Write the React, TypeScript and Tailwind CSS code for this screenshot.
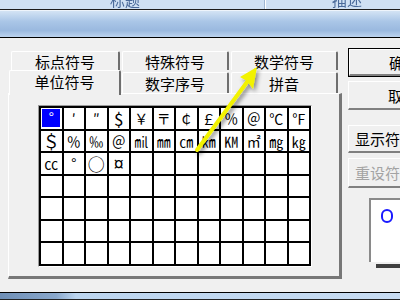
const ROWS: string[][] = [
  ['°', '′', '″', '$', '￥', '〒', '￠', '￡', '％', '＠', '℃', '℉'],
  ['＄', '％', '‰', '＠', '㏕', '㎜', '㎝', '㎞', '㏎', '㎡', '㎎', '㎏'],
  ['㏄', '°', '○', '¤', '', '', '', '', '', '', '', ''],
  Array(12).fill(''),
  Array(12).fill(''),
  Array(12).fill(''),
  Array(12).fill(''),
];

const BIG = new Set(['○', '¤', '$', '＄']);

const TAB = "flex items-center justify-center bg-[#f0f0f0] border-t border-l border-white border-r-2 border-r-[#6e6e6e] rounded-t-[2px] text-[15px] leading-none text-black whitespace-nowrap";
const BTN = "flex items-center whitespace-nowrap border-t border-l border-r-2 border-b-2 border-[#808080] border-t-white border-l-white";

function Arrow() {
  return (
    <svg className="absolute left-0 top-0 pointer-events-none" width="400" height="300">
      <defs>
        <filter id="sh" x="-20%" y="-20%" width="140%" height="140%">
          <feDropShadow dx="2" dy="3" stdDeviation="2" floodColor="#000" floodOpacity="0.45" />
        </filter>
      </defs>
      <g filter="url(#sh)">
        <line x1="197" y1="150" x2="250" y2="78" stroke="#f2f200" strokeWidth="4" strokeLinecap="round" />
        <polygon points="257,67 253,89 247,81 240,77" fill="#f2f200" />
      </g>
    </svg>
  );
}

export default function App() {
  return (
    <div className="relative w-[400px] h-[300px] overflow-hidden bg-[#f0f0f0] font-['Noto_Sans_CJK_SC',sans-serif]">
      {/* header strip */}
      <div className="flex h-[9px] overflow-hidden bg-[#cfe0f3]">
        <div className="w-[264px] pl-[110px]">
          <span className="block -mt-[8px] text-[15px] leading-none text-[#4a6a9a] blur-[0.5px]">标题</span>
        </div>
        <div className="w-px bg-[#9fb6d2]" />
        <div className="w-px bg-white" />
        <div className="pl-[66px]">
          <span className="block -mt-[8px] text-[15px] leading-none text-[#4a6a9a] blur-[0.5px]">描述</span>
        </div>
      </div>
      <div className="h-px bg-[#1c1c1c]" />
      <div className="h-px bg-[#eef4fb]" />
      <div className="h-[26px] bg-[linear-gradient(to_bottom,#d3e3f4,#aac6e7_40%,#9ab9df_75%,#bcd3ee)]" />
      <div className="h-px bg-black" />

      {/* main */}
      <div className="flex h-[254px]">
        <div className="shrink-0 ml-[8px] w-[334px] mt-[13px] flex flex-col">
          <div className="flex gap-[2px] pl-[3px] h-[19px]">
            <div className={`${TAB} w-[109px]`}>标点符号</div>
            <div className={`${TAB} w-[107px]`}>特殊符号</div>
            <div className={`${TAB} w-[107px]`}>数学符号</div>
          </div>
          <div className="flex items-end gap-[1px] pl-[1px] h-[23px]">
            <div className={`${TAB} relative z-10 w-[112px] h-[25px] -mb-[2px] pb-[4px]`}>单位符号</div>
            <div className={`${TAB} w-[107px] h-[21px]`}>数字序号</div>
            <div className={`${TAB} ml-[1px] w-[107px] h-[21px]`}>拼音</div>
          </div>
          <div className="h-[186px] border-t border-l border-white border-r-[3px] border-b-[3px] border-r-[#777] border-b-[#777]">
            <div className="ml-[29px] mt-[11px] w-fit border-t border-l border-[#9a9a9a] border-b border-r border-b-white border-r-white">
              <div className="grid grid-cols-[repeat(12,20.5px)] grid-rows-[repeat(7,20.5px)] gap-[2px] p-[2px] bg-black">
                {ROWS.flat().map((s, i) => (
                  <div
                    key={i}
                    className={`bg-white flex items-center justify-center leading-none text-black ${BIG.has(s) ? 'text-[17px]' : 'text-[14px]'}`}
                  >
                    {i === 0 ? (
                      <div className="w-[18px] h-[18px] bg-[#0000ff] text-white flex items-start justify-center pt-[1px]">{s}</div>
                    ) : s}
                  </div>
                ))}
              </div>
            </div>
          </div>
        </div>

        {/* buttons */}
        <div className="shrink-0 ml-[6px] w-[110px] flex flex-col text-[15px] leading-none">
          <div className="mt-[10px] h-[29px] border border-black">
            <div className={`${BTN} h-full pl-[39px]`}>确定</div>
          </div>
          <div className={`${BTN} mt-[4px] h-[29px] pl-[39px]`}>取消</div>
          <div className={`${BTN} mt-[15px] h-[28px] pl-[6px]`}>显示符号</div>
          <div className={`${BTN} mt-[5px] h-[30px] pl-[6px] text-[#a3a3a3]`}>重设符号</div>
          <div className="mt-[10px] ml-[21px] h-[64px] bg-white border-t-2 border-l-2 border-[#8a8a8a]">
            <div className="ml-[10px] mt-[9px] w-[12px] h-[14px] rounded-full border-2 border-[#1a1aff]" />
          </div>
          <div className="mt-[2px] ml-[28px] h-[4px] bg-[#404040]" />
        </div>
      </div>

      {/* bottom strip */}
      <div className="h-px bg-black" />
      <div className="h-[6px] bg-[linear-gradient(to_right,#6f8fb6_0%,#8aa8cc_14%,#bcd5ef_19%,#c8dcf2_100%)]" />
      <div className="h-px bg-[#222]" />

      <Arrow />
    </div>
  );
}
